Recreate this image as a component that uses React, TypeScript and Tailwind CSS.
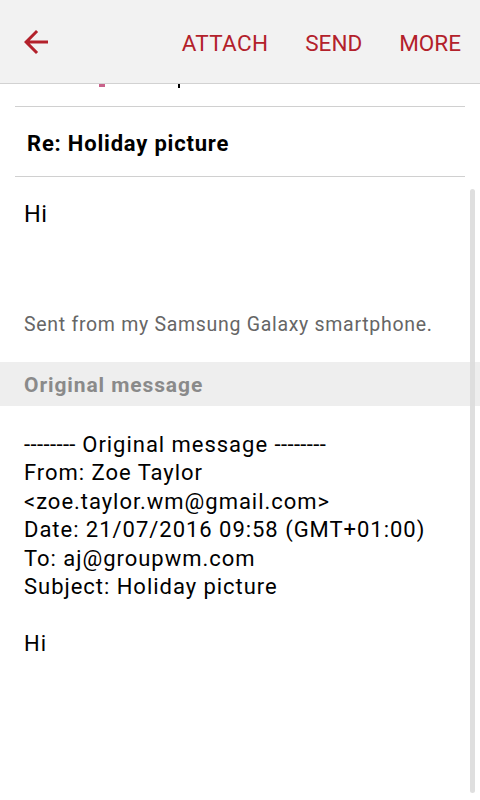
export default function App() {
  const dashes = <span className="tracking-[0.4px]">--------</span>;
  return (
    <div className="relative h-[800px] w-[480px] overflow-hidden bg-white font-['Roboto',sans-serif] text-black">
      <header className="flex h-[84px] items-center border-b border-[#d2d2d2] bg-[#f2f2f2]">
        <svg viewBox="0 0 24 24" className="ml-[18px] h-9 w-9" fill="#b3212b">
          <path d="M20 11H7.83l5.59-5.59L12 4l-8 8 8 8 1.41-1.41L7.83 13H20v-2z" />
        </svg>
        <nav className="ml-auto flex gap-[37px] pr-[19px] pt-[4px] text-[22.5px] text-[#b3212b]">
          <span className="-ml-[2px] tracking-[0.3px]">ATTACH</span>
          <span>SEND</span>
          <span>MORE</span>
        </nav>
      </header>

      <div className="flex h-[22px] items-start">
        <span className="ml-[99px] h-[3px] w-[6px] bg-[#c9628a]" />
        <span className="ml-[73px] h-[4px] w-[2px] bg-black" />
      </div>

      <div className="mx-[15px] w-[450px] border-t border-[#d0d0d0]" />
      <div className="flex h-[69px] items-center px-[27px] pt-[3px] text-[22px] font-bold tracking-[0.8px]">
        Re: Holiday picture
      </div>
      <div className="mx-[15px] w-[450px] border-t border-[#d0d0d0]" />

      <div className="px-[24px] pt-[23px] text-[23.5px] leading-[29px] tracking-[0.5px]">Hi</div>
      <div className="mt-[84px] px-[24px] text-[19.5px] leading-[24px] tracking-[0.7px] text-[#666666]">
        Sent from my Samsung Galaxy smartphone.
      </div>

      <div className="mt-[25px] flex h-[44px] items-center bg-[#eeeeee] px-[24px] pt-[3px] text-[21px] font-bold tracking-[0.9px] text-[#8a8a8a]">
        Original message
      </div>

      <div className="mt-[25px] px-[24px] text-[22px] leading-[28.4px] tracking-[0.97px]">
        <div>
          {dashes} Original message {dashes}
        </div>
        <div>From: Zoe Taylor</div>
        <div>&lt;zoe.taylor.wm@gmail.com&gt;</div>
        <div>Date: 21/07/2016 09:58 (GMT+01:00)</div>
        <div>To: aj@groupwm.com</div>
        <div>Subject: Holiday picture</div>
        <div className="h-[28.4px]" />
        <div>Hi</div>
      </div>

      <div className="absolute left-[470px] top-[189px] h-[604px] w-[5px] rounded-sm bg-[#dcdcdc]/90" />
    </div>
  );
}
